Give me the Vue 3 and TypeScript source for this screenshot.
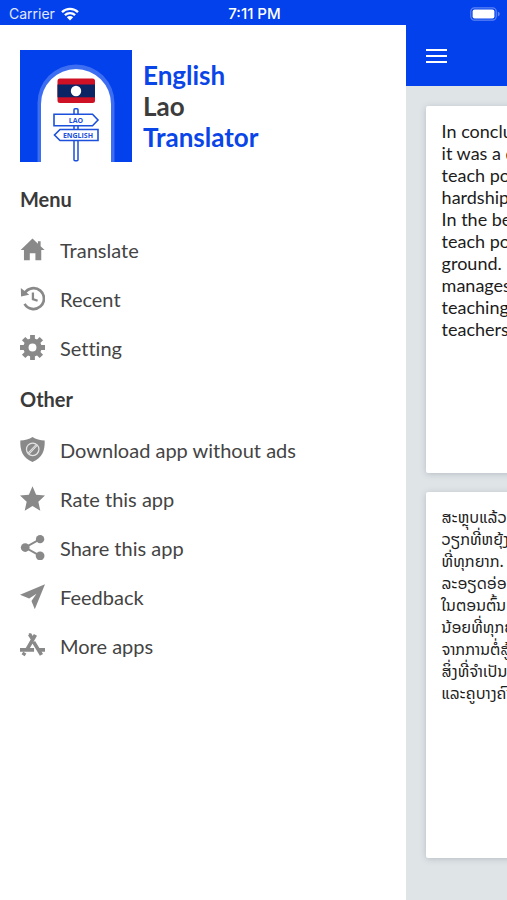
<script setup lang="ts">
import { ref } from 'vue'

type IconName = 'home' | 'recent' | 'gear' | 'shield' | 'star' | 'share' | 'send' | 'apps'

interface MenuSection {
  title: string
  items: { label: string; icon: IconName }[]
}

const sections: MenuSection[] = [
  {
    title: 'Menu',
    items: [
      { label: 'Translate', icon: 'home' },
      { label: 'Recent', icon: 'recent' },
      { label: 'Setting', icon: 'gear' },
    ],
  },
  {
    title: 'Other',
    items: [
      { label: 'Download app without ads', icon: 'shield' },
      { label: 'Rate this app', icon: 'star' },
      { label: 'Share this app', icon: 'share' },
      { label: 'Feedback', icon: 'send' },
      { label: 'More apps', icon: 'apps' },
    ],
  },
]

const source = ref(
  [
    'In conclusion',
    'it was a difficult',
    'teach poor',
    'hardships',
    'In the beginning',
    'teach poor',
    'ground.',
    'manages to',
    'teaching and',
    'teachers',
  ].join('\n'),
)

const translation = ref(
  [
    'ສະຫຼຸບແລ້ວ',
    'ວຽກທີ່ຫຍຸ້ງຍາກ',
    'ທີ່ທຸກຍາກ.',
    'ລະອຽດອ່ອນ',
    'ໃນຕອນຕົ້ນ',
    'ນ້ອຍທີ່ທຸກຍາກ',
    'ຈາກການຕໍ່ສູ້',
    'ສິ່ງທີ່ຈໍາເປັນ',
    'ແລະຄູບາງຄົນ',
  ].join('\n'),
)
</script>

<template>
  <div class="app">
    <div class="status">
      <div class="carrier">
        <span>Carrier</span>
        <svg class="wifi" viewBox="0 0 18 14" aria-hidden="true">
          <path d="M1 5.2a11.5 11.5 0 0 1 16 0M3.9 8.2a7.4 7.4 0 0 1 10.2 0" fill="none" stroke="#fff" stroke-width="2.3" />
          <path d="M9 13.6 5.8 10.3a4.6 4.6 0 0 1 6.4 0z" fill="#fff" />
        </svg>
      </div>
      <span class="time">7:11 PM</span>
      <svg class="battery" viewBox="0 0 30 14" aria-hidden="true">
        <rect x=".8" y=".8" width="25.4" height="12.4" rx="3.6" fill="none" stroke="#5f84f3" stroke-width="1.2" />
        <rect x="2.6" y="2.6" width="21.8" height="8.8" rx="2" fill="#fff" />
        <path d="M27.8 4.6q2 .8 2 2.4t-2 2.4z" fill="#5f84f3" />
      </svg>
    </div>

    <div class="stage">
      <aside class="drawer">
        <header class="brand">
          <svg class="logo" viewBox="0 0 112 112" role="img" aria-label="English Lao Translator">
            <rect width="112" height="112" fill="#0341ec" />
            <path d="M17.500 112V53a38.500 38.500 0 0 1 77 0v59z" fill="#3d6df1" />
            <path d="M21 112V54a35 35 0 0 1 70 0v58z" fill="#fff" />
            <rect x="37.500" y="28.500" width="37.500" height="24.500" rx="2.500" fill="#cf1126" />
            <rect x="37.500" y="34.500" width="37.500" height="12.800" fill="#0b2464" />
            <circle cx="56" cy="41" r="5.200" fill="#fff" />
            <rect x="54" y="58.800" width="4" height="52" rx="1" fill="#fff" stroke="#1c50dc" stroke-width="1.500" />
            <path d="M34 64.300h38.500l5.500 5.700-5.500 5.700H34z" fill="#fff" stroke="#1c50dc" stroke-width="1.600" />
            <path d="M78 79.500H40l-5.500 5.500 5.500 5.500h38z" fill="#fff" stroke="#1c50dc" stroke-width="1.600" />
            <text x="56" y="72.500" text-anchor="middle" class="sign">LAO</text>
            <text x="58" y="87.500" text-anchor="middle" class="sign">ENGLISH</text>
          </svg>
          <h1 class="title">
            <span>English</span>
            <span class="dark">Lao</span>
            <span>Translator</span>
          </h1>
        </header>

        <nav v-for="section in sections" :key="section.title" class="section" :aria-label="section.title">
          <h2>{{ section.title }}</h2>
          <ul>
            <li v-for="item in section.items" :key="item.label">
              <a href="#">
                <svg viewBox="0 0 24 24" class="icon" aria-hidden="true">
                  <path v-if="item.icon === 'home'" d="M12 1.500.6 12.500h3.200v9.800h5.600V15.500h5.400v6.800h5.600v-9.800h3.200L19.800 8.900V4h-2.600v2.400z" />
                  <g v-else-if="item.icon === 'recent'">
                    <path d="M4.400 7A10 10 0 1 1 4.400 17.200" fill="none" stroke="#898989" stroke-width="2.600" />
                    <path d="M.8 1.800 1 10l7.800-1.600z" />
                    <path d="M12.400 6.200v6.400l4.500 1.600" fill="none" stroke="#898989" stroke-width="2.200" />
                  </g>
                  <g v-else-if="item.icon === 'gear'">
                    <g stroke="#898989" stroke-width="4.600">
                      <path d="M12 0v6M12 18v6M0 12h6M18 12h6M3.500 3.500l4 4M16.500 16.500l4 4M3.500 20.500l4-4M16.500 7.500l4-4" />
                    </g>
                    <circle cx="12" cy="12" r="6.300" fill="none" stroke="#898989" stroke-width="5" />
                  </g>
                  <g v-else-if="item.icon === 'shield'">
                    <path d="M12 0c3 2.100 7.500 3.300 11.700 3.300C24 13 21.500 20 12 24 2.500 20 0 13 .3 3.300 4.500 3.300 9 2.100 12 0z" />
                    <g fill="none" stroke="#e4e4e4" stroke-width="1.200">
                      <circle cx="12.200" cy="11.800" r="6" />
                      <path d="M8.800 16.200 16.500 8.100M7.900 15.200l7.600-8" stroke-width="1" />
                    </g>
                  </g>
                  <path v-else-if="item.icon === 'star'" d="m12 .2 3.500 8.200 8.500.8-6.400 5.800 1.900 8.800L12 19.200l-7.500 4.600L6.400 15 0 9.200l8.500-.8z" />
                  <g v-else-if="item.icon === 'share'">
                    <path d="M19.300 4 5 12l14.300 8" fill="none" stroke="#898989" stroke-width="1.900" />
                    <circle cx="19.300" cy="4" r="4" />
                    <circle cx="5" cy="12" r="4.200" />
                    <circle cx="19.300" cy="20" r="4.200" />
                  </g>
                  <path v-else-if="item.icon === 'send'" d="M24 .2 14.200 24.200 11 16.200l4.800-6.800-7 4.400L0 10.400z" />
                  <g v-else fill="none" stroke="#898989" stroke-width="3.500">
                    <path d="M8.500 2h2M14.800 1.800 6.800 15.800M9.200 1.200l2.400 4M0 16.200h13.500M18.500 16.200h5.500M13 8.500l7.600 12.500M4.600 18.800l-1.600 2.600" />
                  </g>
                </svg>
                <span>{{ item.label }}</span>
              </a>
            </li>
          </ul>
        </nav>
      </aside>

      <main class="page">
        <header class="bar">
          <button type="button" class="burger" aria-label="Menu">
            <i></i><i></i><i></i>
          </button>
        </header>
        <div class="cards">
          <textarea v-model="source" class="card" aria-label="English" wrap="off" spellcheck="false"></textarea>
          <textarea v-model="translation" class="card lao" aria-label="Lao" wrap="off" lang="lo" readonly></textarea>
        </div>
      </main>
    </div>
  </div>
</template>

<style>
body {
  margin: 0;
}
</style>

<style scoped>
.app {
  display: flex;
  flex-direction: column;
  min-height: 100vh;
  overflow: hidden;
  background: #fff;
  color: #444;
  font-family: Lato, 'Liberation Sans', sans-serif;
  font-variant-ligatures: none;
}
.status {
  display: grid;
  grid-template-columns: 1fr auto 1fr;
  align-items: center;
  height: 25px;
  padding: 2px 7px 0 9px;
  box-sizing: border-box;
  background: #0341ec;
  color: #fff;
  font: 14px/20px Inter, 'Liberation Sans', sans-serif;
}
.carrier {
  display: flex;
  align-items: center;
  gap: 6px;
  color: #e0e8ff;
}
.wifi {
  width: 18px;
  height: 14px;
}
.time {
  font-size: 15px;
  font-weight: 500;
}
.battery {
  width: 30px;
  height: 14px;
  justify-self: end;
}
.stage {
  display: flex;
  flex: 1;
}
.drawer {
  flex: 0 0 80%;
  box-sizing: border-box;
  padding: 25px 20px;
}
.brand {
  display: flex;
  align-items: center;
  gap: 11px;
  margin-bottom: 10px;
}
.logo {
  width: 112px;
  height: 112px;
}
.sign {
  font: 700 7px 'Open Sans', sans-serif;
  fill: #1c50dc;
}
.title {
  display: flex;
  flex-direction: column;
  margin: 0;
  color: #0a45e8;
  font-size: 26px;
  line-height: 31px;
  font-weight: 700;
}
.dark {
  color: #3c3c3c;
}
.section h2 {
  margin: 0;
  padding: 13px 0 12px;
  color: #3a3a3a;
  font-size: 20px;
  line-height: 28px;
  font-weight: 700;
}
.section ul {
  margin: 0;
  padding: 0;
  list-style: none;
}
.section a {
  display: flex;
  align-items: center;
  gap: 15px;
  height: 49px;
  color: #444;
  font-size: 20px;
  line-height: 28px;
  text-decoration: none;
}
.icon {
  width: 25px;
  height: 25px;
  fill: #898989;
}
.page {
  display: flex;
  flex: 0 0 100%;
  flex-direction: column;
  background: #dfe4e7;
}
.bar {
  display: flex;
  align-items: center;
  height: 61px;
  padding: 0 20px;
  background: #0341ec;
}
.burger {
  display: flex;
  flex-direction: column;
  gap: 4px;
  padding: 0;
  border: 0;
  background: none;
}
.burger i {
  width: 21px;
  height: 2px;
  background: #fff;
}
.cards {
  display: flex;
  flex: 1;
  flex-direction: column;
  gap: 19px;
  padding: 20px 20px 42px;
}
.card {
  flex: 1;
  box-sizing: border-box;
  padding: 14px 16px;
  border: 0;
  border-radius: 2px;
  outline: 0;
  resize: none;
  overflow: hidden;
  background: #fff;
  box-shadow: 0 1px 6px #b4bcc2;
  color: #1c1c1c;
  font: 18px/22px Lato, 'Liberation Sans', sans-serif;
}
.lao {
  font-family: 'Noto Sans Lao', 'DejaVu Sans', sans-serif;
  font-size: 16px;
}
</style>
